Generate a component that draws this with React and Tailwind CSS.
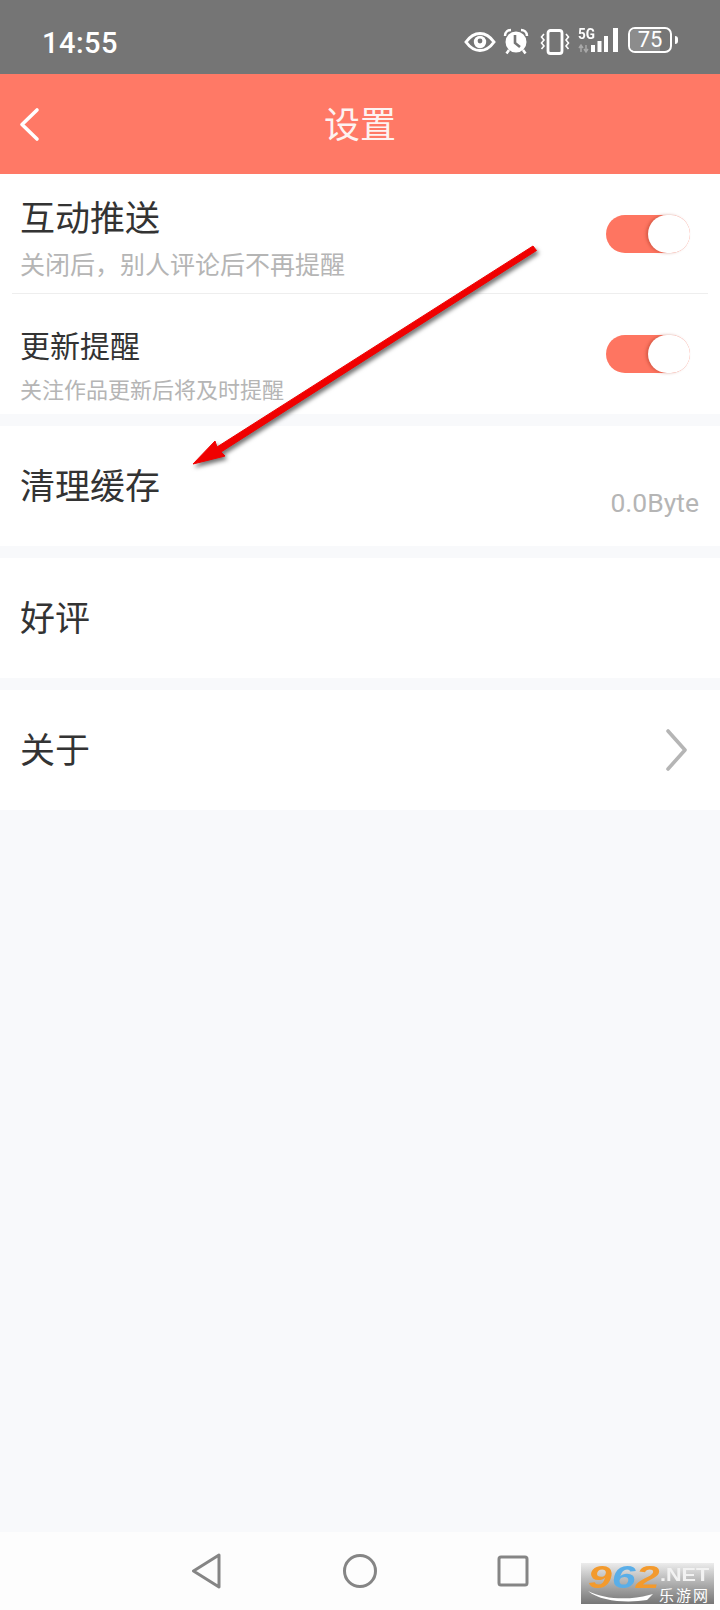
const cjk = "font-['Noto_Sans_CJK_SC','Noto_Sans',sans-serif]";

function Toggle() {
  return (
    <div className="w-[84px] h-[38px] rounded-full bg-[#fe7561] flex justify-end">
      <div className="w-[42px] h-[38px] rounded-full bg-white shadow-[-2px_0_3px_rgba(170,60,40,0.45)]" />
    </div>
  );
}

function StatusIcons() {
  return (
    <div className="flex items-start">
      <svg width="36" height="28" viewBox="0 0 36 28" className="mt-[1px] -ml-[8px]">
        <path d="M4 14 C9 7 14 5.5 18 5.5 C22 5.5 27 7 32 14 C27 21 22 22.5 18 22.5 C14 22.5 9 21 4 14 Z" fill="none" stroke="#fff" strokeWidth="3" />
        <circle cx="18" cy="14" r="6.2" fill="#fff" />
        <circle cx="18" cy="13" r="2.4" fill="#757575" />
      </svg>
      <svg width="28" height="28" viewBox="0 0 28 28" className="ml-[4px] mt-[1px]">
        <path d="M3 8 C3 4 6 2 9 2 M25 8 C25 4 22 2 19 2" fill="none" stroke="#fff" strokeWidth="2.5" />
        <circle cx="14" cy="14" r="10.5" fill="#fff" />
        <path d="M13 7 V15 L18 19" fill="none" stroke="#757575" strokeWidth="2.6" />
        <path d="M7 22 L4.5 25.5 M21 22 L23.5 25.5" stroke="#fff" strokeWidth="2.6" />
      </svg>
      <svg width="30" height="26" viewBox="0 0 30 26" className="ml-[10px] mt-[2px]">
        <rect x="8" y="1.5" width="14" height="23" rx="2.5" fill="none" stroke="#fff" strokeWidth="2.8" />
        <path d="M4 5 L1.5 8 L4 11 L1.5 14 L4 17 L1.5 20 M26 5 L28.5 8 L26 11 L28.5 14 L26 17 L28.5 20" fill="none" stroke="#fff" strokeWidth="1.6" />
      </svg>
      <div className="relative w-[42px] h-[26px] ml-[8px] mt-[1px]">
        <span className="absolute left-0 top-[-2px] text-[15px] leading-[16px] font-bold text-white font-['Roboto',sans-serif] scale-x-90 origin-left">5G</span>
        <svg width="42" height="26" viewBox="0 0 42 26" className="absolute left-0 top-0">
          <path d="M3 17 V24 M1 20 L3 17 L5 20 M8 24 V17 M6 21 L8 24 L10 21" fill="none" stroke="#a8a8a8" strokeWidth="1.5" />
          <rect x="13" y="17" width="4" height="7" fill="#fff" />
          <rect x="19.5" y="13" width="4" height="11" fill="#fff" />
          <rect x="26" y="8" width="4" height="16" fill="#fff" />
          <rect x="35" y="0" width="5" height="24" fill="#fff" />
        </svg>
      </div>
      <div className="ml-[8px] relative w-[44px] h-[26px] border-2 border-white rounded-[7px] flex items-center justify-center">
        <div className="absolute left-0 top-0 bottom-0 w-[75%] rounded-l-[5px] bg-[#8c8c8c]" />
        <span className="relative text-[22px] leading-[22px] text-white font-['Roboto',sans-serif]">75</span>
      </div>
      <div className="ml-[3px] mt-[9px] w-[3px] h-[8px] bg-white rounded-r-sm" />
    </div>
  );
}

function Watermark() {
  return (
    <div className="absolute left-[581px] top-[1563px] w-[133px] h-[41px] bg-gradient-to-b from-[#ececec] to-[#767676] font-['Liberation_Sans',sans-serif]">
      <div className="absolute left-[7px] top-[-4px] text-[32px] leading-[36px] font-bold italic scale-x-[1.34] origin-left">
        <span className="text-[#f39a2d]">9</span>
        <span className="text-[#5aaee8]">6</span>
        <span className="text-[#f39a2d]">2</span>
      </div>
      <div className="absolute left-[79px] top-[2px] text-[18px] leading-[20px] font-bold text-[#f2f2f2] scale-x-[1.2] origin-left">.NET</div>
      <div className={`absolute left-[78px] top-[24px] text-[15px] leading-[16px] text-white tracking-[2px] ${cjk}`}>乐游网</div>
      <svg width="70" height="14" viewBox="0 0 70 14" className="absolute left-[6px] top-[26px]">
        <path d="M1 2 C18 11 44 11 62 6 L66 5 L60 11 C42 14 14 13 1 2 Z" fill="#fff" />
      </svg>
    </div>
  );
}

export default function App() {
  return (
    <div className={`relative w-[720px] h-[1610px] flex flex-col bg-[#f8f9fb] overflow-hidden ${cjk}`} lang="zh-CN">
      <div className="h-[74px] bg-[#757575] flex justify-between pl-[42px] pr-[42px] pt-[27px]">
        <span className="text-[29px] leading-[32px] font-medium text-white tracking-[0.5px] font-['Roboto',sans-serif]">14:55</span>
        <StatusIcons />
      </div>

      <div className="relative h-[100px] bg-[#ff7966] flex items-center justify-center">
        <svg width="24" height="36" viewBox="0 0 24 36" className="absolute left-[17px] top-[32px]">
          <path d="M20 4 L5 18.5 L20 33" fill="none" stroke="#fff" strokeWidth="3.6" strokeLinecap="round" strokeLinejoin="round" />
        </svg>
        <span className="text-[36px] leading-[40px] -mt-[4px] text-[#fdf3f1]">设置</span>
      </div>

      <div className="bg-white">
        <div className="h-[119px] flex justify-between pl-[20px] pr-[30px]">
          <div className="pt-[24px]">
            <div className="text-[35px] leading-[35px] text-[#333333]">互动推送</div>
            <div className="mt-[18px] text-[25px] leading-[25px] text-[#b5b5b5]">关闭后，别人评论后不再提醒</div>
          </div>
          <div className="pt-[41px]"><Toggle /></div>
        </div>
        <div className="mx-[12px] h-[1px] bg-[#eeeeee]" />
        <div className="h-[120px] flex justify-between pl-[20px] pr-[30px]">
          <div className="pt-[35px]">
            <div className="text-[30px] leading-[30px] text-[#333333]">更新提醒</div>
            <div className="mt-[18px] text-[22px] leading-[22px] text-[#b5b5b5]">关注作品更新后将及时提醒</div>
          </div>
          <div className="pt-[41px]"><Toggle /></div>
        </div>
      </div>

      <div className="mt-[12px] h-[120px] bg-white flex justify-between items-end pl-[20px] pr-[21px]">
        <span className="self-center text-[35px] leading-[35px] -mt-[6px] text-[#333333]">清理缓存</span>
        <span className="pb-[31px] text-[26.5px] leading-[25px] text-[#b5b5b5] font-['Roboto',sans-serif]">0.0Byte</span>
      </div>

      <div className="mt-[12px] h-[120px] bg-white flex items-center pl-[20px]">
        <span className="text-[35px] leading-[35px] -mt-[6px] text-[#333333]">好评</span>
      </div>

      <div className="mt-[12px] h-[120px] bg-white flex items-center justify-between pl-[20px] pr-[31px]">
        <span className="text-[35px] leading-[35px] -mt-[6px] text-[#333333]">关于</span>
        <svg width="24" height="42" viewBox="0 0 24 42">
          <path d="M3 2 L20 21 L3 40" fill="none" stroke="#b5b5b5" strokeWidth="3.6" strokeLinecap="round" strokeLinejoin="round" />
        </svg>
      </div>

      <div className="flex-1" />

      <div className="h-[78px] bg-[#fdfdfd] relative flex items-start pt-[21px] pl-[191px]">
        <svg width="31" height="36" viewBox="0 0 31 36">
          <path d="M28 2 L2.5 18 L28 34 Z" fill="none" stroke="#858585" strokeWidth="3" strokeLinejoin="round" />
        </svg>
        <svg width="36" height="36" viewBox="0 0 36 36" className="ml-[120px]">
          <circle cx="18" cy="18" r="15.5" fill="none" stroke="#858585" strokeWidth="3" />
        </svg>
        <svg width="34" height="34" viewBox="0 0 34 34" className="ml-[118px] mt-[1px]">
          <rect x="3" y="3" width="28" height="28" rx="2" fill="none" stroke="#858585" strokeWidth="3" />
        </svg>
      </div>

      <Watermark />

      <svg width="720" height="1610" viewBox="0 0 720 1610" className="absolute left-0 top-0 pointer-events-none drop-shadow-[2px_3px_2px_rgba(0,0,0,0.55)]">
        <path d="M533 246 L536.5 250.5 L221 452 L225 456 L193 464 L215 441 L217 447 Z" fill="#f00000" stroke="#f00000" strokeWidth="1" strokeLinejoin="round" />
      </svg>
    </div>
  );
}
